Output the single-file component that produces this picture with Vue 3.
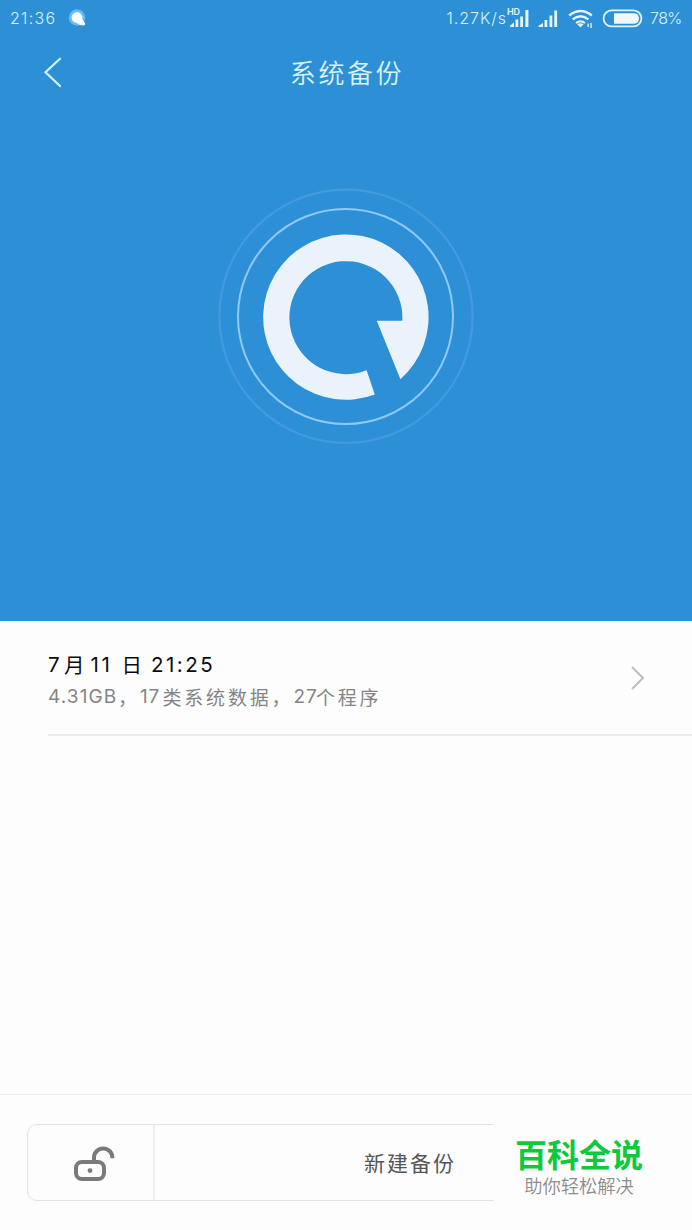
<template>
  <div class="page">
    <section class="hero">
      <div class="status-bar">
        <span class="time">{{ time }}</span>
        <svg class="app-dot" width="20" height="18" viewBox="0 0 20 18">
          <circle cx="9" cy="8.5" r="8.2" fill="#62bdf5" />
          <circle cx="9" cy="8.5" r="5.4" fill="#fff" />
          <path d="M8 13 L14 9.5 L17.3 14.8 Q17.5 16.5 15.5 16.5 Q11 16.5 8 13 Z" fill="#fff" />
        </svg>
        <span class="speed">{{ speed }}</span>
        <svg class="signals" width="176" height="30" viewBox="0 0 176 30">
          <text class="hd" x="0" y="14" textLength="13">HD</text>
          <g fill="#e6f6fe">
            <path d="M3 26 V24.5 L7 21.5 V26 Z" />
            <rect x="8.5" y="18.5" width="2.8" height="7.5" />
            <rect x="13.2" y="15.5" width="2.8" height="10.5" />
            <rect x="18.4" y="9" width="3" height="17" />
            <path d="M31.5 26 V24.8 L36 22 V26 Z" />
            <rect x="37.5" y="19" width="2.8" height="7" />
            <rect x="42.5" y="14.5" width="2.8" height="11.5" />
            <rect x="47.3" y="9.5" width="2.8" height="16.5" />
            <path d="M70.2 23.3 L73.4 26.5 L76.6 23.3 Q73.4 21 70.2 23.3Z" />
          </g>
          <g fill="none" stroke="#e6f6fe" stroke-width="2.5">
            <path d="M62.2 14.5 Q73.5 5.5 84.8 14.5" />
            <path d="M65.7 18.4 Q73.5 12 81.4 18.4" />
            <path d="M69 22 Q73.5 18.4 78 22" stroke-width="2" />
          </g>
          <path d="M81.2 26 V22.5 M84 22 V27" stroke="#c8ebfc" stroke-width="1.5" />
          <rect x="96.6" y="9.4" width="37.8" height="16" rx="8" fill="none" stroke="#dff3fd" stroke-width="1.8" />
          <path d="M107 12.2 H126.5 Q132 12.2 132 17.4 Q132 22.7 126.5 22.7 H107 Z" fill="#f0f8fd" />
        </svg>
        <span class="battery">{{ battery }}</span>
      </div>

      <header class="title-bar">
        <svg class="back" width="20" height="32" viewBox="0 0 20 32">
          <path d="M17 2.7 L2.5 16.3 L17 30" fill="none" stroke="#d5f1fd" stroke-width="2.2" stroke-linecap="round" />
        </svg>
        <h1>系统备份</h1>
      </header>

      <svg class="emblem" width="270" height="270" viewBox="0 0 270 270">
        <circle cx="136" cy="136.3" r="126.6" fill="none" stroke="#439bdd" stroke-width="2.2" />
        <circle cx="135.5" cy="136.5" r="107.5" fill="none" stroke="#8dcaf7" stroke-width="2" />
        <path
          d="M192.3 140.8 A56.5 56.5 0 1 0 156.6 190.2 L164.8 214.6 A82.7 82.7 0 1 1 190.4 199.3 L166.8 140.8 Z"
          fill="#eaf3fb"
        />
      </svg>
    </section>

    <main class="list">
      <div v-for="item in backups" :key="item.size" class="backup">
        <div class="info">
          <div class="date">
            <span class="month">7</span><span>月</span><span class="day">11</span><span>日</span><span class="clock">{{ item.clock }}</span>
          </div>
          <div class="detail">
            <span class="size">{{ item.size }}</span><span class="comma">，</span><span class="count">{{ item.system }}</span><span class="cjk">类系统数据</span><span class="comma">，</span><span class="count">{{ item.apps }}</span><span class="cjk">个程序</span>
          </div>
        </div>
        <svg width="16" height="26" viewBox="0 0 16 26">
          <path d="M2 2 L13 13 L2 24" fill="none" stroke="#bcbcbc" stroke-width="1.9" />
        </svg>
      </div>
    </main>

    <footer class="toolbar">
      <div class="buttons">
        <button class="lock">
          <svg width="44" height="38" viewBox="0 0 44 38">
            <rect x="4" y="17" width="28" height="17" rx="6" fill="none" stroke="#7a7a7a" stroke-width="4" />
            <circle cx="18" cy="25.6" r="2.4" fill="#7a7a7a" />
            <path d="M22 17 V12.5 A9.2 9.2 0 0 1 40.4 12.8 V13.3" fill="none" stroke="#7a7a7a" stroke-width="4" />
          </svg>
        </button>
        <button class="create">新建备份</button>
      </div>
      <div class="brand">
        <strong>百科全说</strong>
        <span>助你轻松解决</span>
      </div>
    </footer>
  </div>
</template>

<script setup>
import { ref } from 'vue'

const time = ref('21:36')
const speed = ref('1.27K/s')
const battery = ref('78%')

const backups = ref([
  { clock: '21:25', size: '4.31GB', system: 17, apps: 27 }
])
</script>

<style>
body {
  margin: 0;
  background: #fdfdfd;
}
</style>

<style scoped>
.page {
  display: flex;
  flex-direction: column;
  width: 692px;
  height: 1230px;
  overflow: hidden;
  background: #fdfdfd;
  font-family: Inter, "Noto Sans CJK SC", sans-serif;
}

.hero {
  display: flex;
  flex-direction: column;
  flex: none;
  height: 621px;
  background: #2d8fd5;
  color: #daf2fd;
}

.status-bar {
  display: flex;
  align-items: center;
  height: 36px;
  padding: 0 10px;
  font-size: 16px;
  font-weight: 300;
}

.time {
  width: 58px;
  letter-spacing: 1.3px;
}

.speed {
  margin-left: auto;
  letter-spacing: 0.95px;
}

.signals {
  flex: none;
  margin-bottom: 5px;
}

.hd {
  font-size: 9px;
  font-weight: 600;
  fill: #e6f6fe;
}

.status-bar .battery {
  width: 32px;
  margin-left: -33px;
  letter-spacing: -0.6px;
  white-space: nowrap;
}

.title-bar {
  display: grid;
  grid-template-columns: 63px 1fr 61px;
  align-items: center;
  height: 72px;
}

.back {
  justify-self: end;
}

h1 {
  margin: 0 0 2px;
  text-align: center;
  font-size: 26px;
  font-weight: 350;
  letter-spacing: 2.6px;
}

.emblem {
  margin: 72px 0 0 210px;
}

.list {
  flex: 1;
}

.backup {
  display: flex;
  align-items: center;
  justify-content: space-between;
  box-sizing: border-box;
  height: 115px;
  margin-left: 48px;
  padding-right: 46px;
  border-bottom: 2px solid #ececec;
}

.info {
  padding-top: 5px;
}

.date,
.detail {
  display: flex;
  align-items: center;
  white-space: nowrap;
}

.date {
  height: 33px;
  font-size: 20.5px;
  color: #0b0b0b;
}

.month {
  width: 16px;
}

.day {
  width: 31px;
  margin-left: 6px;
  letter-spacing: 2.6px;
}

.clock {
  margin-left: 9px;
  letter-spacing: 2.5px;
}

.detail {
  height: 32px;
  font-size: 19px;
  color: #858585;
}

.size {
  width: 70px;
  letter-spacing: 1.1px;
}

.comma {
  width: 22px;
}

.count {
  width: 22.5px;
  letter-spacing: 0.8px;
}

.cjk {
  letter-spacing: 2.8px;
}

.toolbar {
  display: flex;
  align-items: flex-start;
  position: relative;
  box-sizing: border-box;
  height: 136px;
  padding: 29px 26px 0 27px;
  border-top: 1px solid #ebebeb;
}

.buttons {
  display: flex;
  box-sizing: border-box;
  width: 639px;
  height: 77px;
  border: 1px solid #e2e2e2;
  border-radius: 10px;
}

button {
  padding: 0;
  border: 0;
  background: none;
  font-family: inherit;
}

.lock {
  display: flex;
  align-items: center;
  justify-content: center;
  width: 127px;
  padding: 2px 0 0 7px;
  border-right: 2px solid #efefef;
}

.create {
  flex: 1;
  padding-bottom: 2px;
  font-size: 21px;
  letter-spacing: 2px;
  color: #555;
}

.brand {
  position: absolute;
  left: 494px;
  top: 20px;
  display: flex;
  flex-direction: column;
  align-items: center;
  box-sizing: border-box;
  width: 198px;
  height: 100px;
  padding: 19px 28px 0 0;
  background: #fdfdfd;
}

.brand strong {
  line-height: 44px;
  font-size: 32px;
  font-weight: 700;
  color: #0fc83b;
}

.brand span {
  line-height: 16px;
  font-size: 18.3px;
  font-weight: 350;
  color: #8c8c8c;
}
</style>
